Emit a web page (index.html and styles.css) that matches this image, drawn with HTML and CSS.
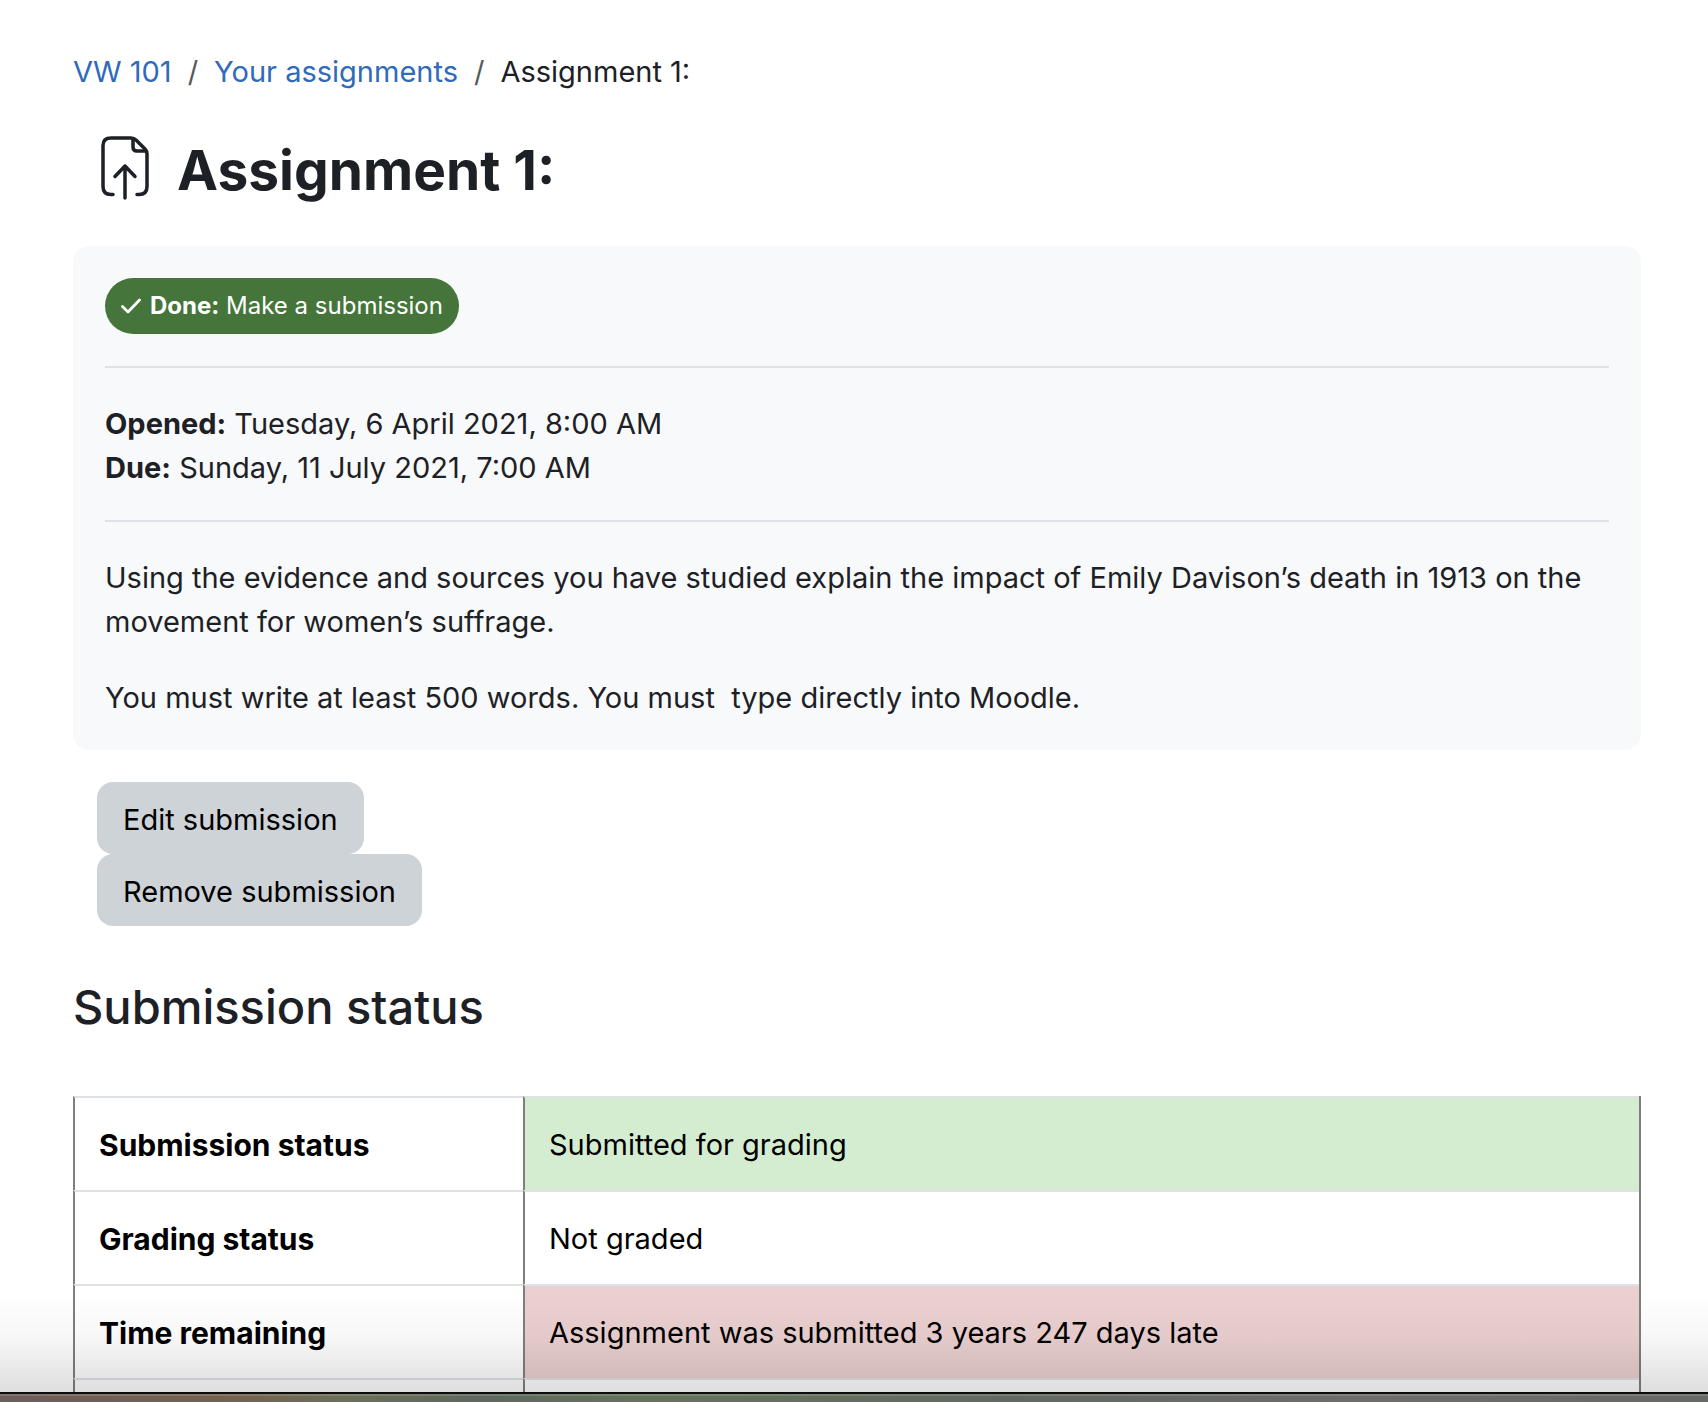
FILE: index.html
```html
<!DOCTYPE html>
<html lang="en">
<head>
<meta charset="utf-8">
<meta name="viewport" content="width=device-width, initial-scale=1">
<title>VW 101: Assignment 1</title>
<link rel="stylesheet" href="styles.css">
</head>
<body>
<main class="page">
  <nav class="breadcrumb" aria-label="Breadcrumb">
    <a href="#">VW 101</a>
    <span class="breadcrumb-divider">/</span>
    <a href="#">Your assignments</a>
    <span class="breadcrumb-divider">/</span>
    <span>Assignment 1:</span>
  </nav>

  <header class="page-header">
    <svg class="activity-icon" viewBox="0 0 48 64" fill="none" stroke="currentColor" stroke-width="3.500" stroke-linecap="round" stroke-linejoin="round" aria-hidden="true">
      <path d="M12 58.500H10Q2 58.500 2 50.500V9.500Q2 2 10 2H30Q33 2 35 4L44 13Q46 15 46 18V50.500Q46 58.500 38 58.500H36"/>
      <path d="M32 3V11Q32 15 36 15H45"/>
      <path d="M24 62V30M14 40.500L24 30L34 40.500"/>
    </svg>
    <h1>Assignment 1:</h1>
  </header>

  <section class="activity">
    <div class="completion">
      <span class="badge">
        <svg class="check" viewBox="0 0 20 16" fill="none" stroke="currentColor" stroke-width="2.800" stroke-linecap="round" stroke-linejoin="round" aria-hidden="true"><path d="M1.500 8.500L7 14L18.500 2"/></svg>
        <span><strong>Done:</strong> Make a submission</span>
      </span>
    </div>
    <div class="dates">
      <div><strong>Opened:</strong> Tuesday, 6 April 2021, 8:00 AM</div>
      <div><strong>Due:</strong> Sunday, 11 July 2021, 7:00 AM</div>
    </div>
    <div class="description">
      <p>Using the evidence and sources you have studied explain the impact of Emily Davison’s death in 1913 on the movement for women’s suffrage.</p>
      <p>You must write at least 500 words. You must&nbsp; type directly into Moodle.</p>
    </div>
  </section>

  <div class="actions">
    <button type="button" class="btn">Edit submission</button>
    <button type="button" class="btn">Remove submission</button>
  </div>

  <h2>Submission status</h2>
  <table class="status">
    <tbody>
      <tr><th scope="row">Submission status</th><td class="submitted">Submitted for grading</td></tr>
      <tr><th scope="row">Grading status</th><td>Not graded</td></tr>
      <tr><th scope="row">Time remaining</th><td class="late">Assignment was submitted 3 years 247 days late</td></tr>
      <tr><th scope="row"></th><td></td></tr>
    </tbody>
  </table>
</main>
<div class="desktop-edge"></div>
</body>
</html>
```
FILE: styles.css
```css
* {
  box-sizing: border-box;
}

body {
  display: flex;
  flex-direction: column;
  height: 100vh;
  margin: 0;
  background: #fff;
  color: #1d2125;
  font: 29px/44px Inter, "Liberation Sans", sans-serif;
}

h1, h2, p {
  margin: 0;
}

.page {
  position: relative;
  flex: 1;
  min-height: 0;
  overflow: hidden;
  padding: 50px 67px 0 73px;
}

.page::after {
  content: "";
  position: absolute;
  inset: auto 0 0;
  height: 100px;
  background: linear-gradient(rgba(0, 0, 0, 0), rgba(0, 0, 0, 0.03) 45%, rgba(0, 0, 0, 0.13));
  pointer-events: none;
}

.breadcrumb {
  display: flex;
  gap: 16px;
}

.breadcrumb a {
  color: #2f6abb;
  text-decoration: none;
}

.breadcrumb-divider {
  color: #55595d;
}

.page-header {
  display: flex;
  align-items: flex-start;
  gap: 28px;
  padding: 40px 28px;
}

.activity-icon {
  width: 48px;
  height: 64px;
  margin-top: 2px;
}

h1 {
  font-size: 55px;
  line-height: 72px;
  font-weight: 700;
}

.activity {
  padding: 32px 32px 30px;
  border-radius: 16px;
  background: #f8f9fb;
}

.completion {
  display: flex;
}

.badge {
  display: flex;
  align-items: center;
  gap: 9px;
  height: 56px;
  padding: 0 16px;
  border-radius: 28px;
  background: #45753a;
  color: #fff;
  font-size: 24px;
}

.check {
  width: 20px;
  height: 16px;
}

.dates, .description {
  padding-top: 34px;
  border-top: 2px solid #dfe1e6;
}

.dates {
  margin-top: 32px;
}

.description {
  margin-top: 30px;
}

.description p + p {
  margin-top: 32px;
}

.actions {
  display: flex;
  flex-direction: column;
  align-items: flex-start;
  padding: 32px 24px 48px;
}

.btn {
  padding: 16px 26px 12px;
  border: 0;
  border-radius: 16px;
  background: #ced3d7;
  color: #000;
  font: inherit;
}

h2 {
  font-size: 47px;
  line-height: 66px;
  font-weight: 500;
  margin-bottom: 56px;
}

.status {
  width: 100%;
  border-collapse: separate;
  border-spacing: 0;
  table-layout: fixed;
  border-right: 2px solid #7f7f7f;
  color: #000;
}

.status th, .status td {
  height: 94px;
  padding: 2px 24px 0;
  border-top: 2px solid #dee2e6;
  border-left: 2px solid #7f7f7f;
  text-align: left;
}

.status th {
  width: 450px;
  font-size: 30px;
  font-weight: 700;
}

.status .submitted {
  background: #d4edd1;
}

.status .late {
  background: #ebd0d0;
}

.desktop-edge {
  height: 10px;
  border-top: 2px solid #0c0c0a;
  background: linear-gradient(90deg, #6d5d5b, #75624f 14%, #6b7059 20%, #5f685f 28%, #66735c 38%, #636963 60%, #6e6d6c 80%, #676966);
  box-shadow: inset 0 2px rgba(255, 255, 255, 0.14);
}
```
